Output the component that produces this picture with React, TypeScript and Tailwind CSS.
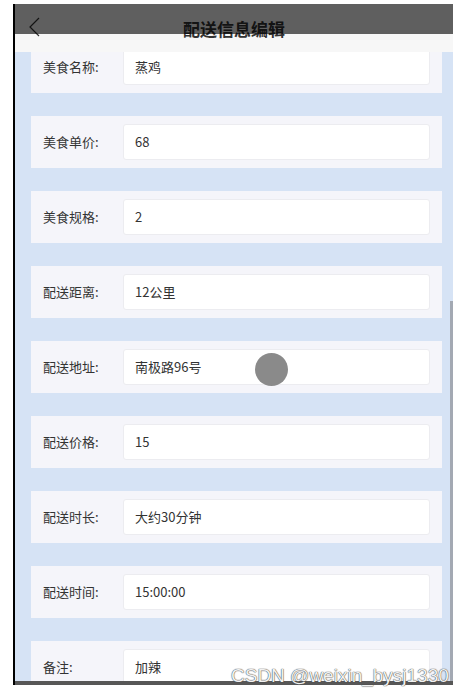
import React from "react";

const rows: [string, string][] = [
  ["美食名称:", "蒸鸡"],
  ["美食单价:", "68"],
  ["美食规格:", "2"],
  ["配送距离:", "12公里"],
  ["配送地址:", "南极路96号"],
  ["配送价格:", "15"],
  ["配送时长:", "大约30分钟"],
  ["配送时间:", "15:00:00"],
  ["备注:", "加辣"],
];

export default function App() {
  return (
    <div
      className="relative w-[464px] h-[695px] bg-white overflow-hidden"
      style={{ fontFamily: '"Noto Sans CJK SC", "Noto Sans", sans-serif' }}
    >
      <div className="relative ml-[13px] mt-[4px] w-[440px] h-[681px] border-l-2 border-black bg-[#d6e3f5] flex flex-col overflow-hidden">
        {/* header */}
        <div className="relative h-[48px] shrink-0 bg-[#f7f7f7] flex justify-center">
          <svg
            className="absolute left-[14px] top-[13px]"
            width="12"
            height="20"
            viewBox="0 0 12 20"
          >
            <polyline points="10,1 1,10 10,19" fill="none" stroke="#333" strokeWidth="1.2" />
          </svg>
          <div className="mt-[15px] text-[17px] leading-[20px] font-semibold text-[#333]">
            配送信息编辑
          </div>
          <div className="absolute left-0 top-0 w-full h-[30px] bg-[rgba(0,0,0,0.615)]" />
        </div>

        {/* content */}
        <div className="relative flex-1 overflow-hidden">
          <div className="-mt-[11px] flex flex-col">
            {rows.map(([label, value]) => (
              <div
                key={label}
                className="ml-[16px] w-[411px] h-[52px] mb-[23px] bg-[#f5f5fa] flex items-center pl-[12px] pr-[12px] shrink-0"
              >
                <div className="w-[80px] text-[13px] text-[#333]">{label}</div>
                <div className="flex-1 h-[36px] bg-white rounded-[3px] border border-[#ececf0] flex items-center pl-[11px] text-[13px] text-[#333]">
                  {value}
                </div>
              </div>
            ))}
          </div>
          {/* scrollbar */}
          <div className="absolute right-0 top-[249px] w-[3px] h-[400px] bg-[#a3a9b3]" />
          {/* touch indicator */}
          <div className="absolute left-[240px] top-[301px] w-[33px] h-[33px] rounded-full bg-[#8a8a8a] blur-[0.6px]" />
        </div>

        {/* bottom bar */}
        <div className="h-[4px] shrink-0 bg-[#575757]" />
      </div>

      <div
        className="absolute left-[231px] top-[665px] text-[19px] leading-[22px] text-[#f2f2f2] [text-shadow:0_0_1px_#444,0_0_1px_#444]"
        style={{ fontFamily: '"Liberation Sans", Arial, sans-serif' }}
      >
        CSDN @weixin_bysj1330
      </div>
    </div>
  );
}
